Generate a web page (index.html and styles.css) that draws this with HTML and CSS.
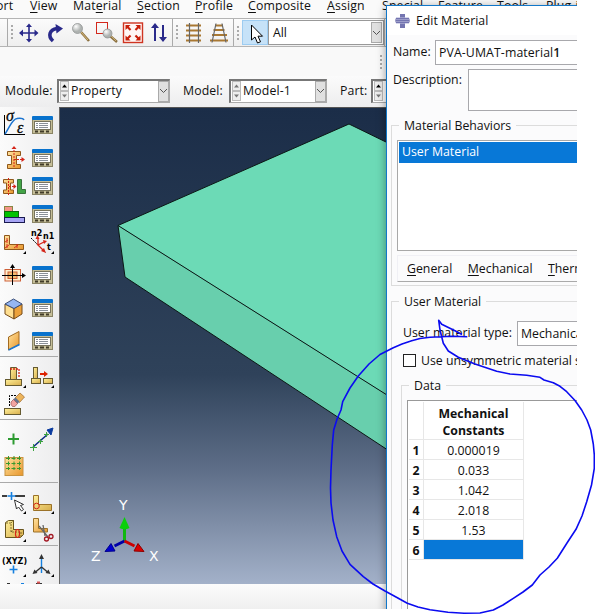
FILE: index.html
```html
<!DOCTYPE html>
<html lang="en">
<head>
<meta charset="utf-8">
<title>Edit Material</title>
<link rel="stylesheet" href="styles.css">
</head>
<body>
<svg class="defs" width="0" height="0">
  <defs>
    <linearGradient id="gold" x1="0" y1="0" x2="1" y2="1"><stop offset="0" stop-color="#ffe3a0"/><stop offset="1" stop-color="#e8962c"/></linearGradient>
    <linearGradient id="yel" x1="0" y1="0" x2="1" y2="1"><stop offset="0" stop-color="#fff09a"/><stop offset="1" stop-color="#d8ae4c"/></linearGradient>
    <radialGradient id="lens" cx=".35" cy=".3"><stop offset="0" stop-color="#fff"/><stop offset="1" stop-color="#aeb2b0"/></radialGradient>
    <symbol id="manager" viewBox="0 0 21 18">
      <rect x=".5" y="3.500" width="20" height="14" fill="#c5be98" stroke="#8a8464"/>
      <rect x="0" y="0" width="21" height="4" rx="1" fill="#0872cd"/>
      <rect x="2" y="5" width="17" height="9" fill="#77735c"/>
      <rect x="3" y="6" width="15" height="7" fill="#fff"/>
      <path d="M4 7.500h2M4 9.500h2M4 11.500h2M7 7.500h9M7 9.500h9M7 11.500h9" stroke="#7d838c" stroke-width=".9"/>
      <path d="M3 15.500h3M8 15.500h4M14 15.500h3" stroke="#403b28" stroke-width="1.800"/>
    </symbol>
    <symbol id="more" viewBox="0 0 3 3"><path d="M3 0v3H0z" fill="#000"/></symbol>
  </defs>
</svg>
<div class="screen">
  <main class="app">
    <nav class="menubar">
      <span class="clip-start">ort</span><span><u>V</u>iew</span><span>Mat<u>e</u>rial</span><span><u>S</u>ection</span><span><u>P</u>rofile</span><span><u>C</u>omposite</span><span><u>A</u>ssign</span><span>S<u>p</u>ecial</span><span>Feat<u>u</u>re</span><span><u>T</u>ools</span><span>Plug-<u>i</u>ns</span>
    </nav>
    <div class="toolbar">
      <div class="tools-edge"></div>
      <div class="tools-view">
        <i class="grip"></i>
        <svg width="165" height="26" viewBox="8 20 165 26">
          <g stroke="#29298a" fill="#29298a" stroke-width="1.6">
            <path d="M21 33h16M29 25v16"/>
            <path d="M19 33l4-3.5v7zM38.500 33l-4-3.500v7zM29 23.500l-3 3.500h6zM29 42.500l-3-3.500h6z" stroke="none"/>
            <path d="M53 41c-5.500-5-3.500-11.500 4-12.500" fill="none" stroke-width="3.600"/>
            <path d="M55.500 24l7.500 4.500-6.500 5z" stroke="none"/>
            <path d="M155 41V26M163 25v15" stroke-width="2"/>
            <path d="M155 23l-4 5h8zM163 42l-4-5h8z" stroke="none"/>
          </g>
          <path d="M81 32l8 9" stroke="#8c7140" stroke-width="2.600"/><path d="M81 32l7 8" stroke="#d8bb7c"/>
          <circle cx="77.500" cy="28.500" r="5" fill="url(#lens)" stroke="#888b8b" stroke-width=".7"/>
          <rect x="96.500" y="22.500" width="11" height="11" fill="none" stroke="#d3281c"/>
          <path d="M109 35l8 7" stroke="#8c7140" stroke-width="2.500"/><path d="M110 35l6 6" stroke="#d8bb7c" stroke-width=".8"/>
          <circle cx="107.500" cy="33.500" r="4.500" fill="url(#lens)" stroke="#888b8b" stroke-width=".7"/>
          <rect x="123.500" y="23" width="19" height="19.500" fill="#fff7f5" stroke="#cf3421" stroke-width="1.400"/>
          <path d="M125.500 25h5l-1.700 1.700 2.500 2.500-1.500 1.500-2.500-2.500-1.800 1.800zM140.500 25h-5l1.700 1.700-2.500 2.500 1.500 1.500 2.500-2.500 1.800 1.800zM125.500 40.500h5l-1.700-1.700 2.500-2.500-1.500-1.500-2.500 2.500-1.800-1.800zM140.500 40.500h-5l1.700-1.700-2.500-2.500 1.500-1.500 2.500 2.500 1.800-1.800z" fill="#c91f0a"/>
        </svg>
      </div>
      <div class="tools-persp">
        <i class="grip"></i>
        <svg width="60" height="26" viewBox="174 20 60 26">
          <path d="M187 25.500h15M187 30.500h15M187 35.500h15M187 40.500h15" stroke="#a97832" stroke-width="2"/>
          <path d="M190.500 23v20M199.500 23v20" stroke="#666" stroke-width="1.200"/>
          <path d="M216 25.500h8M214.500 30h11M213 35h15M211 40.500h18" stroke="#a97832" stroke-width="2"/>
          <path d="M217 23.500l-4 19M223 23.500l4 19" stroke="#666" stroke-width="1.200"/>
        </svg>
      </div>
      <div class="tools-select">
        <i class="grip"></i>
        <div class="pick"><svg width="24" height="24"><path d="M8.500 4v15l3.500-3 2.500 6 3-1.200-2.500-5.600h4.500z" fill="#fff" stroke="#000"/></svg></div>
        <div class="combo all"><span>All</span><b class="drop"><svg width="9" height="6"><path d="M1 1l3.500 3.500L8 1" fill="none" stroke="#555"/></svg></b></div>
      </div>
    </div>
    <div class="spare"><i class="grip"></i></div>
    <div class="context">
      <label class="l-module">Module:</label>
      <div class="combo module"><svg class="spin" width="9" height="20"><rect x=".5" y=".5" width="8" height="9"/><rect x=".5" y="10.500" width="8" height="9"/><path class="on" d="M2 6.500h5l-2.500-3z"/><path d="M2 13.500h5l-2.500 3z"/></svg><span>Property</span><b class="drop"><svg width="9" height="6"><path d="M1 1l3.500 3.500L8 1" fill="none" stroke="#555"/></svg></b></div>
      <label class="l-model">Model:</label>
      <div class="combo model"><svg class="spin" width="9" height="20"><rect x=".5" y=".5" width="8" height="9"/><rect x=".5" y="10.500" width="8" height="9"/><path d="M2 6.500h5l-2.500-3z"/><path d="M2 13.500h5l-2.500 3z"/></svg><span>Model-1</span><b class="drop"><svg width="9" height="6"><path d="M1 1l3.500 3.500L8 1" fill="none" stroke="#555"/></svg></b></div>
      <label class="l-part">Part:</label>
      <div class="combo part"><svg class="spin" width="9" height="20"><rect x=".5" y=".5" width="8" height="9"/><rect x=".5" y="10.500" width="8" height="9"/><path class="on" d="M2 6.500h5l-2.500-3z"/><path d="M2 13.500h5l-2.500 3z"/></svg></div>
    </div>
    <div class="work">
      <aside class="toolbox">
        <svg class="group" width="58" height="249" viewBox="0 107 58 249">
          <path d="M4.500 115v19.500H25" fill="none" stroke="#000"/>
          <path d="M5 134c5-7 7-15 12-15.500 4-.5 6-.5 7 1.500" fill="none" stroke="#1b74d0" stroke-width="1.500"/>
          <text x="6" y="121" class="greek">σ</text><text x="17" y="133" class="greek">ε</text>
          <use href="#manager" x="32" y="116" width="21" height="18"/>
          <use href="#manager" x="32" y="149" width="21" height="18"/>
          <use href="#manager" x="32" y="177" width="21" height="18"/>
          <use href="#manager" x="32" y="205" width="21" height="18"/>
          <use href="#manager" x="32" y="266" width="21" height="18"/>
          <use href="#manager" x="32" y="299" width="21" height="18"/>
          <use href="#manager" x="32" y="332" width="21" height="18"/>
          <path d="M7.500 151.500h13v4h-4v9h4v4h-13v-4h4v-9h-4z" fill="url(#gold)" stroke="#90581b"/>
          <path d="M14 167v-19M14 159.500h8" stroke="#d52519" stroke-dasharray="2 1"/><path d="M14 146l-2.500 3h5zM25 159.500l-3.500-2.500v5z" fill="#d52519"/>
          <path d="M3.500 179.500h10v3.500h-3v7h3v3.500h-10v-3.500h3v-7h-3z" fill="url(#gold)" stroke="#90581b"/>
          <path d="M8.500 178v17M9 186.500h5" stroke="#d52519" stroke-dasharray="2 1"/><path d="M16.500 186.500l-3-2.500v5z" fill="#d52519"/>
          <path d="M17.500 179.500h4v10h4v4h-8z" fill="#43a447" stroke="#3a723c"/>
          <rect x="4.500" y="206.500" width="8" height="5" fill="#f49486" stroke="#884"/><rect x="4.500" y="211.500" width="14" height="6" fill="#00c300" stroke="#086b08"/><rect x="4.500" y="217.500" width="20" height="5" fill="#a6a4f4" stroke="#191950"/>
          <path d="M4.500 235.500h5v9h14v5h-19z" fill="url(#gold)" stroke="#90581b"/><path d="M5 242l3-2M7 238v5M5 248l4-3M7 244v4M14 248l4-3M17 244v4" stroke="#d52519" stroke-width=".9"/>
          <use href="#more" x="23" y="251" width="3" height="3"/>
          <text x="31" y="236" class="tiny">n2</text><text x="43" y="239" class="tiny">n1</text><text x="47" y="250" class="tiny">t</text>
          <path d="M31 238l15 15" stroke="#000" stroke-dasharray="2 1"/><path d="M38 245v-7M38 245l6-3M37 244l6 6" stroke="#d52519" stroke-width="1.300"/><path d="M37.500 235l-2 4h4zM47 241l-4-1 1 4zM46 253l-2-5-3 3z" fill="#d52519"/>
          <use href="#more" x="51" y="251" width="3" height="3"/>
          <rect x="5" y="269.500" width="15.500" height="11.500" fill="#fff0cf" stroke="#ce6139"/><rect x="8" y="272" width="9" height="6.500" fill="#f3be72" stroke="#ce6139"/>
          <path d="M2 275.500h22M12.500 285v-19" stroke="#000"/><path d="M26 275.500l-4-2.500v5zM12.500 264l-2.500 4h5z" fill="#000"/>
          <path d="M5 304l9 4.500v10.500l-9-5z" fill="#ffdf91" stroke="#754b19"/><path d="M14 308.500l8-4.500v10l-8 5z" fill="#eca13a" stroke="#754b19"/><path d="M5 304l8.500-5 8.500 5-8 4.500z" fill="#95b6f2" stroke="#3c4f78"/>
          <path d="M8.500 337l10.500-5.500v13l-10.500 5.500z" fill="url(#gold)" stroke="#a26b22"/><path d="M8.500 350l11-5.500" stroke="#1976d2" stroke-width="1.500"/>
        </svg>
        <svg class="group" width="58" height="62" viewBox="0 357 58 62">
          <path d="M10.500 367.500h6v12h-6z" fill="url(#yel)" stroke="#665b31"/><rect x="5.500" y="379.500" width="16" height="6" fill="url(#yel)" stroke="#665b31"/><path d="M10 369h9v9" fill="none" stroke="#d52519" stroke-width="1.300" stroke-dasharray="2 1"/>
          <use href="#more" x="23" y="385" width="3" height="3"/>
          <rect x="33.500" y="367.500" width="4" height="11" fill="url(#yel)" stroke="#665b31"/><rect x="31.500" y="378.500" width="9" height="5" fill="url(#yel)" stroke="#665b31"/><rect x="43.500" y="378.500" width="9" height="5" fill="url(#yel)" stroke="#665b31"/>
          <path d="M40 374h4" stroke="#d20" stroke-width="2"/><path d="M48 374l-4-3v6z" fill="#d20"/>
          <use href="#more" x="51" y="385" width="3" height="3"/>
          <rect x="4.500" y="408.500" width="16" height="6" fill="url(#yel)" stroke="#665b31"/><path d="M9.500 406v-10.500h7" fill="none" stroke="#000" stroke-dasharray="2 1"/>
          <path d="M15 398l5-5 4.500 4-5 5.500z" fill="#ecb45b" stroke="#9c6529" stroke-width=".7"/><path d="M13 399.500l2.500-2 4 4-2 2.500z" fill="#66758f"/><path d="M11 402l2.500-2.500 4 4-2.500 3h-2.500l-1.500-2z" fill="#f2a4a1" stroke="#955" stroke-width=".7"/>
        </svg>
        <svg class="group" width="58" height="62" viewBox="0 420 58 62">
          <path d="M8 439h11M13.500 433.500v11" stroke="#2d9b31" stroke-width="2"/>
          <path d="M33 447l15-13" stroke="#0c2c83" stroke-width="1.600"/><path d="M53 428l-6 2 4 5z" fill="#0c3c9f" stroke="#0c3c9f"/><path d="M30 447.500h7M33.500 444v7M38 441.500h5M40.500 439v5M44 434.500h5M46.500 432v5" stroke="#3ba33e"/>
          <rect x="5" y="457.500" width="18" height="18" fill="url(#gold)" stroke="#c89442"/>
          <path d="M6 458.500h16M6 463.500h16M6 468.500h16M8.500 456v14M14 456v14M19.500 456v14" stroke="#38992f" stroke-dasharray="4 1.500"/>
        </svg>
        <svg class="group" width="58" height="62" viewBox="0 483 58 62">
          <path d="M2 496h5M15 496h10" stroke="#000" stroke-width="1.500"/><path d="M7.500 496h8M11.500 492v8" stroke="#1680df" stroke-width="1.600"/><path d="M14.500 500l2 9 2-2 3 4 2-1.500-3-4 3-1z" fill="#fff" stroke="#333"/>
          <use href="#more" x="23" y="511" width="3" height="3"/>
          <path d="M33.500 495.500h5v9h13v6h-18z" fill="url(#yel)" stroke="#9b7228"/><circle cx="36.500" cy="506" r="2.800" fill="none" stroke="#d52519"/>
          <use href="#more" x="51" y="511" width="3" height="3"/>
          <path d="M5.500 522.500l3-2h5v9h10v5l-3 3h-15z" fill="url(#yel)" stroke="#68551e"/><path d="M6 523h5v9h10v5M11 523l3-3M11 532l3-3" fill="none" stroke="#68551e" stroke-width=".8" stroke-dasharray="2 1"/><ellipse cx="17.500" cy="533.500" rx="2" ry="4" fill="none" stroke="#d52519" stroke-width="1.200"/>
          <use href="#more" x="23" y="539" width="3" height="3"/>
          <path d="M33.500 518.500h5v10h9v3.500h-14z" fill="url(#gold)" stroke="#9b7228"/><path d="M39 526l9 11M43 525l2 11" stroke="#666" stroke-width="1.300"/><circle cx="46.500" cy="539" r="2" fill="none" stroke="#a31622" stroke-width="1.300"/><circle cx="51" cy="536.500" r="2" fill="none" stroke="#a31622" stroke-width="1.300"/>
        </svg>
        <svg class="group" width="58" height="38" viewBox="0 546 58 38">
          <text x="2" y="564" class="xyz">(XYZ)</text><path d="M9.500 569.500h8M13.500 565.500v8" stroke="#1680df" stroke-width="1.600"/>
          <use href="#more" x="23" y="574" width="3" height="3"/>
          <path d="M41.500 558v15" stroke="#1680df" stroke-width="1.400"/><path d="M41.500 567l-6 5M41.500 567l6 5" stroke="#333" stroke-width="1.400"/><path d="M41.500 554l-2.500 5h5zM32.500 574l5-1-3-3.500zM50.500 574l-5-1 3-3.500z" fill="#333"/>
          <use href="#more" x="51" y="574" width="3" height="3"/>
          <path d="M7 583.500h3M36 583.500h6" stroke="#333"/><path d="M21 583.500h3" stroke="#1680df"/><path d="M37 582.500h3" stroke="#d55" stroke-width="2"/>
        </svg>
      </aside>
      <section class="viewport">
        <svg width="327" height="476" viewBox="60 108 327 476">
          <path d="M118 225.500L349 124l38 18.500V395z" fill="#6cdab6"/>
          <path d="M118 225.500L387 395v54.500L125 277z" fill="#68cfad"/>
          <path d="M118 225.500L349 124l38 18.500M118 225.500L387 395M118 225.500l7 51.500 262 172.500" fill="none" stroke="#0b1614"/>
          <path d="M124.500 541v-16" stroke="#10b810" stroke-width="3"/><path d="M124.500 517l-5 11q5 2.500 10 0z" fill="#0bd00b"/>
          <path d="M124.500 541l-10 5" stroke="#0000a8" stroke-width="3"/><path d="M105 551.500l6-8 4 7.500z" fill="#0000d0" stroke="#00008c"/>
          <path d="M124.500 541l10 5" stroke="#c00" stroke-width="3"/><path d="M144 551.500l-6-8-4 7.500z" fill="#d00" stroke="#8c0000"/>
          <text x="119" y="510" class="axis">Y</text><text x="91" y="561" class="axis">Z</text><text x="149" y="561" class="axis">X</text>
        </svg>
      </section>
    </div>
    <footer class="prompt"></footer>
  </main>

  <section class="dialog">
    <header class="title">
      <svg width="16" height="16"><path d="M5 1h5v4h4q1.500 3 0 5h-4v5H5v-5H1q-1.500-2.500 0-5h4z" fill="#7475b0"/><path d="M1 4.500h13M1 6.500h13M1 8.500h13M1 10.500h13" stroke="#b9badb" stroke-width=".6"/></svg>
      <span>Edit Material</span>
    </header>
    <div class="row name"><label>Name:</label><div class="field">PVA-UMAT-material<b>1</b></div></div>
    <div class="row desc"><label>Description:</label><div class="field"></div></div>
    <fieldset class="behaviors">
      <legend>Material Behaviors</legend>
      <div class="list"><div class="selected">User Material</div></div>
      <div class="tabs"><span><u>G</u>eneral</span><span><u>M</u>echanical</span><span><u>T</u>hermal</span></div>
    </fieldset>
    <fieldset class="usermat">
      <legend>User Material</legend>
      <div class="row type"><label>User material type:</label><div class="field">Mechanical</div></div>
      <div class="row check"><i class="box"></i><label>Use unsymmetric material stiffness</label></div>
      <fieldset class="data">
        <legend>Data</legend>
        <div class="sheet">
          <table>
            <tr class="head"><th></th><th>Mechanical<br>Constants</th></tr>
            <tr><th>1</th><td>0.000019</td></tr>
            <tr><th>2</th><td>0.033</td></tr>
            <tr><th>3</th><td>1.042</td></tr>
            <tr><th>4</th><td>2.018</td></tr>
            <tr><th>5</th><td>1.53</td></tr>
            <tr><th>6</th><td class="active"></td></tr>
          </table>
        </div>
      </fieldset>
    </fieldset>
  </section>
</div>
<svg class="ink" width="595" height="614" viewBox="0 0 595 614">
  <path d="M467.300 336.700L452 336.300L430 337.300L420 338.500L411.700 340.700L402 344L393.300 347.700L380 354.500L369 364L358.300 376L350 388L342.700 401.700L341 410L337.300 418.300L333.700 430L332.300 445L331 470L330.500 488L331 503L333 520L336.700 536.700L342 551L350 564.300L363.300 576.700L373 584L385 591L396 597L407.300 603.300L418 607L430 609.700L448 612.300L464 613.200L480 613L493.300 610L503 605L513.300 598.300L523 592L532.300 585L540 575L549 567L557.300 558.300L567 543L576 529.300L582 516L586.700 501.700L591.500 485L594.300 468.300L594.300 455L593.300 444L590.700 430L587 420L581.700 410L575 400.500L566.700 391.700L560 386.300L553.300 382.700L544 380L540 377.300L526.700 375.300L510 374L496.700 371.300L475 364L458.300 357.300L448.300 351L443.300 343.300L441.500 336L440 330L438.700 320.300L441.700 324.300L455 330.700L462 334.500" fill="none" stroke="#0b0bf0" stroke-width="1.600" stroke-linejoin="round"/>
</svg>
</body>
</html>
```

FILE: styles.css
```css
* { box-sizing: border-box; }
body { margin: 0; width: 595px; height: 614px; overflow: hidden; background: #fff; color: #111; font: 12.3px/17px "Open Sans", "Noto Sans", sans-serif; }
svg { display: block; flex: none; }
u { text-underline-offset: 2px; }
.defs { position: absolute; }
.screen { position: relative; width: 577px; height: 609px; overflow: hidden; }
.app { width: 577px; height: 609px; display: flex; flex-direction: column; background: #f4f4f5; }

.menubar { height: 18px; flex: none; display: grid; grid-template-columns: 30px 43px 64px 58px 53px 79px 55px 56px 59px 49px 50px; line-height: 11px; letter-spacing: .15px; white-space: nowrap; background: #fafafa; }
.clip-start { text-indent: -4px; }
.toolbar { height: 29px; flex: none; display: flex; border-top: 1px solid #b4b4b4; border-bottom: 1px solid #b4b4b4; background: linear-gradient(#fbfbfb, #efefef); }
.tools-edge { width: 8px; border-right: 1px solid #aaa; }
.tools-view { width: 165px; border-right: 1px solid #aaa; position: relative; }
.tools-persp { width: 61px; border-right: 1px solid #aaa; position: relative; }
.tools-view svg, .tools-persp svg { margin-top: 1px; }
.tools-view .grip, .tools-persp .grip { position: absolute; left: 3px; top: 6px; }
.grip { width: 2px; height: 14px; background: repeating-linear-gradient(#aaa 0 2px, transparent 2px 4px); }
.tools-select { display: flex; align-items: center; width: 151px; border-right: 1px solid #aaa; }
.tools-select .grip { margin: 0 3px 0 3px; }
.pick { width: 26px; height: 25px; background: #c6e2f8; border: 1px solid #9dccf1; }
.combo { display: flex; align-items: center; background: #fff; border: 1px solid #999; }
.combo .drop { width: 11px; align-self: stretch; margin-left: auto; display: flex; align-items: center; justify-content: center; background: #e0e0e0; border: 1px solid #aaa; }
.combo.all { width: 117px; height: 25px; padding: 1px; }
.combo.all span { margin-left: 3px; }
.spare { height: 29px; flex: none; display: flex; justify-content: flex-end; align-items: center; padding-right: 195px; background: #f9f9f9; }
.context { height: 31px; flex: none; display: flex; align-items: center; padding: 0 0 2px 5px; background: linear-gradient(#fbfbfb, #ededee); }
.context .combo { height: 24px; border-width: 2px 1px 1px 2px; border-style: solid; border-color: #777 #aaa #aaa #777; }
.context label { margin-top: -1px; letter-spacing: .1px; }
.l-module { width: 52px; }
.l-model { width: 46px; margin-left: 13px; }
.l-part { width: 31px; margin-left: 13px; }
.combo.module { width: 113px; }
.combo.model { width: 98px; }
.combo.part { width: 60px; }
.context .combo span { margin: -2px 0 0 2px; letter-spacing: .15px; }
.spin { margin-left: 1px; }
.spin rect { fill: #eee; stroke: #bbb; }
.spin path { fill: #777; }
.spin .on { fill: #000; }

.work { height: 477px; flex: none; display: flex; }
.toolbox { width: 59px; flex: none; overflow: hidden; background: linear-gradient(90deg, #fbfbfb, #ededee); }
.group + .group { border-top: 1px solid #aaa; box-sizing: content-box; }
.greek { font: italic 16px "Liberation Serif", serif; stroke: #111; stroke-width: .3; }
.tiny { font: bold 8px "DejaVu Sans", sans-serif; }
.xyz { font: bold 8px "DejaVu Sans", sans-serif; }
.viewport { flex: 1; border-left: 1px solid #666; border-top: 1px solid #555; background: linear-gradient(#1b2d48 0%, #2f425a 56%, #5e6e88 76%, #a3b1c9 100%); }
.axis { font: 14px "DejaVu Sans", sans-serif; fill: #fff; }
.prompt { flex: 1; background: linear-gradient(#fcfcfc, #efefef); }

.dialog { position: absolute; left: 386px; top: 5px; width: 330px; height: 620px; background: #fbfbfc; border-left: 1px solid #1177c9; border-top: 1px solid #1177c9; box-shadow: 0 2px 9px rgba(0, 0, 0, .4); white-space: nowrap; }
.title { height: 29px; display: flex; align-items: center; gap: 5px; padding-left: 8px; background: #fff; }
.row { display: flex; }
.field { flex: 1; background: #fff; border: 1px solid #a8a8ac; padding-left: 3px; }
.name { height: 25px; margin: 5px 0 0 6px; line-height: 23px; }
.name label { width: 42px; }
.name .field { letter-spacing: .1px; }
.name b { font-weight: 600; }
.desc { height: 42px; margin: 4px 0 0 6px; }
.desc label { width: 75px; line-height: 21px; }
fieldset { margin: 0; padding: 0; min-width: 0; border: 1px solid #dcdcdc; }
legend { margin-left: 7px; padding: 0 5px; line-height: 17px; }
.behaviors { margin: 6px 0 0 4px; height: 169px; }
.behaviors .list { height: 111px; margin: 6px 0 0 5px; border: 1px solid #a8a8a8; background: #fff; padding: 1px; }
.selected { height: 21px; padding-left: 3px; line-height: 20px; color: #fff; background: #0878d7; }
.tabs { display: flex; gap: 15.5px; height: 27px; margin: 4px 0 0 5px; padding-left: 9px; line-height: 25px; border: 1px solid #f0f0f5; border-bottom-color: #aaa; }
.usermat { margin: 7px 0 0 4px; height: 400px; }
.type { height: 25px; margin: 11px 0 0 11px; line-height: 24px; }
.type label { width: 114px; }
.check { height: 17px; margin: 6px 0 0 11px; gap: 5px; align-items: center; }
.box { width: 13px; height: 13px; border: 1px solid #222; background: #fff; }
.data { margin: 8px 0 0 9px; height: 300px; }
.sheet { margin: 6px 0 0 5px; border: 1px solid #999; height: 260px; background: #fff; padding: 1px; }
table { border-collapse: separate; border-spacing: 0; table-layout: fixed; width: 115px; }
th, td { height: 20px; padding: 1px 0 0; border-right: 1px solid #e7e7e7; border-bottom: 1px solid #e7e7e7; text-align: center; }
th { width: 15px; font-weight: 700; }
.head th { height: 38px; padding-top: 2px; }
.head th + th { width: 100px; }
.active { background: #0878d7; }
.ink { position: absolute; left: 0; top: 0; }
```
